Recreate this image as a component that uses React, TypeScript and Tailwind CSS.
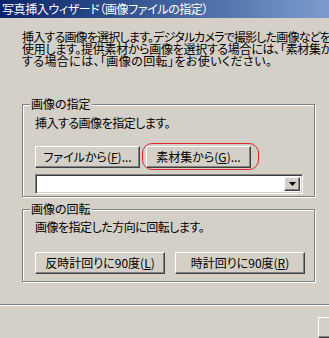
import type { ReactNode } from "react";

// classic raised button edge
const raised =
  "border border-t-white border-l-white border-r-[#404040] border-b-[#404040] shadow-[inset_-1px_-1px_0_#808080] bg-[#d4d0c8]";

function WinButton({ children, className = "" }: { children: ReactNode; className?: string }) {
  return (
    <div className={`${raised} flex items-center justify-center h-[22px] shrink-0 ${className}`}>
      <span className="leading-[12px] whitespace-nowrap">{children}</span>
    </div>
  );
}

function GroupBox({ title, className = "", children }: { title: string; className?: string; children: ReactNode }) {
  return (
    <div
      className={`relative ml-[22px] w-[293px] border border-[#808080] shadow-[inset_1px_1px_0_#fff,1px_1px_0_#fff] ${className}`}
    >
      <span className="absolute left-[7px] top-[-7px] px-[1px] bg-[#d4d0c8] leading-[12px] whitespace-nowrap">
        {title}
      </span>
      {children}
    </div>
  );
}

export default function App() {
  return (
    <div className="w-[329px] h-[338px] overflow-hidden bg-[#d4d0c8] text-black text-[12px] font-['Noto_Sans_CJK_JP',sans-serif] [font-feature-settings:'palt']">
      {/* Title bar */}
      <div className="h-[18px] flex items-center pl-[2px] bg-gradient-to-r from-[#0a246a] to-[#7c9dcc] text-white whitespace-nowrap leading-[12px] tracking-[-0.4px]">
        写真挿入ウィザード（画像ファイルの指定）
      </div>

      {/* Description */}
      <div className="mt-[13px] pl-[22px] leading-[12px] overflow-hidden">
        <div className="whitespace-nowrap tracking-[-0.8px]">挿入する画像を選択します。デジタルカメラで撮影した画像などを取</div>
        <div className="whitespace-nowrap tracking-[-0.3px]">使用します。提供素材から画像を選択する場合には、「素材集から</div>
        <div className="whitespace-nowrap tracking-[0.4px]">する場合には、「画像の回転」をお使いください。</div>
      </div>

      {/* 画像の指定 */}
      <GroupBox title="画像の指定" className="mt-[37px] h-[93px]">
        <div className="pt-[12px] pl-[12px] leading-[12px] whitespace-nowrap tracking-[-0.5px]">挿入する画像を指定します。</div>
        <div className="flex gap-[6px] mt-[17px] pl-[12px]">
          <WinButton className="w-[105px]">
            ファイルから(<u>F</u>)...
          </WinButton>
          <div className="relative">
            <WinButton className="w-[105px]">
              素材集から(<u>G</u>)...
            </WinButton>
            <div className="absolute left-[-4px] top-[-3px] w-[117px] h-[27px] rounded-[10px] border border-[#e02828] pointer-events-none" />
          </div>
        </div>
        <div className="mt-[6px] ml-[12px] w-[268px] h-[20px] flex bg-white border border-t-[#808080] border-l-[#808080] border-r-white border-b-white shadow-[inset_1px_1px_0_#404040,inset_-1px_-1px_0_#d4d0c8] p-[2px]">
          <div className="flex-1" />
          <div className={`${raised} w-[16px] h-full flex items-center justify-center`}>
            <svg width="7" height="4" viewBox="0 0 7 4">
              <path d="M0 0h7L3.5 4z" fill="#000" />
            </svg>
          </div>
        </div>
      </GroupBox>

      {/* 画像の回転 */}
      <GroupBox title="画像の回転" className="mt-[12px] h-[73px]">
        <div className="pt-[11px] pl-[12px] leading-[12px] whitespace-nowrap tracking-[-0.5px]">画像を指定した方向に回転します。</div>
        <div className="flex gap-[10px] mt-[19px] pl-[12px]">
          <WinButton className="w-[130px]">
            反時計回りに90度(<u>L</u>)
          </WinButton>
          <WinButton className="w-[130px]">
            時計回りに90度(<u>R</u>)
          </WinButton>
        </div>
      </GroupBox>

      {/* Separator */}
      <div className="mt-[22px] h-[2px] border-t border-t-[#808080] border-b border-b-white" />

      {/* Footer buttons */}
      <div className="flex mt-[11px] pl-[318px]">
        <div className={`${raised} w-[80px] h-[21px] shrink-0`} />
      </div>
    </div>
  );
}
